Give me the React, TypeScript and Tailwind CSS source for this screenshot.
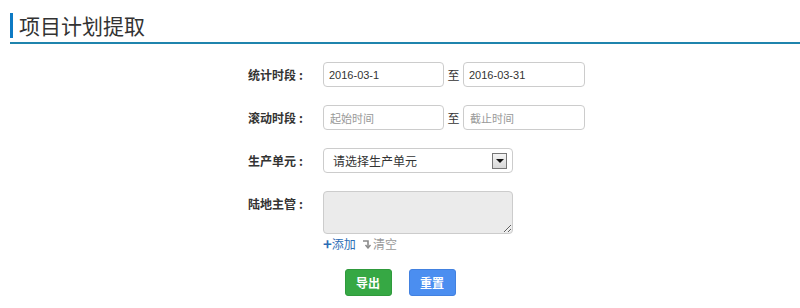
import React from 'react';

const cjk = { fontFamily: '"Noto Sans CJK SC", "Noto Sans", sans-serif' };

const Label: React.FC<{ text: string }> = ({ text }) => (
  <div className="w-[80px] shrink-0 flex justify-end pr-[1px] text-[12px] font-bold leading-[25px] text-[#333]">
    <span>{text}</span>
    <span className="ml-[3px]">:</span>
  </div>
);

const App: React.FC = () => {
  return (
    <div className="w-[800px] h-[308px] bg-white text-[#333]" style={cjk}>
      {/* Title */}
      <div className="pl-[10px] pt-[12px]">
        <div className="flex items-center h-[26px]">
          <div className="w-[3px] h-[25px] bg-[#0d7ac4]" />
          <h1 className="ml-[6px] text-[21px] leading-[26px] font-normal text-[#333]">项目计划提取</h1>
        </div>
        <div className="mt-[4px] h-[2px] bg-[#1f84ad]" />
      </div>

      {/* Form */}
      <div className="ml-[224px] mt-[18px] flex flex-col gap-[18px]">
        <div className="flex items-center">
          <Label text="统计时段" />
          <div className="ml-[19px] flex items-center">
            <input
              className="w-[121px] h-[25px] border border-[#ccc] rounded-[4px] px-[5px] text-[11px] text-[#333] outline-none"
              defaultValue="2016-03-1"
              style={{ fontFamily: '"Liberation Sans", sans-serif' }}
            />
            <span className="w-[19px] text-center text-[12px]">至</span>
            <input
              className="w-[122px] h-[25px] border border-[#ccc] rounded-[4px] px-[5px] text-[11px] text-[#333] outline-none"
              defaultValue="2016-03-31"
              style={{ fontFamily: '"Liberation Sans", sans-serif' }}
            />
          </div>
        </div>

        <div className="flex items-center">
          <Label text="滚动时段" />
          <div className="ml-[19px] flex items-center">
            <input
              className="w-[121px] h-[25px] border border-[#ccc] rounded-[4px] px-[6px] text-[11px] outline-none placeholder:text-[#999]"
              placeholder="起始时间"
            />
            <span className="w-[19px] text-center text-[12px]">至</span>
            <input
              className="w-[122px] h-[25px] border border-[#ccc] rounded-[4px] px-[6px] text-[11px] outline-none placeholder:text-[#999]"
              placeholder="截止时间"
            />
          </div>
        </div>

        <div className="flex items-center">
          <Label text="生产单元" />
          <div className="ml-[19px] w-[190px] h-[25px] border border-[#ccc] rounded-[4px] flex items-center justify-between pl-[9px] pr-[5px]">
            <span className="text-[12px] text-[#333]">请选择生产单元</span>
            <div className="w-[15px] h-[16px] border border-[#777] bg-gradient-to-b from-[#f4f4f4] to-[#d8d8d8] flex items-center justify-center">
              <div className="w-0 h-0 border-l-[4px] border-r-[4px] border-t-[4px] border-l-transparent border-r-transparent border-t-[#111]" />
            </div>
          </div>
        </div>

        <div className="flex items-start">
          <Label text="陆地主管" />
          <div className="ml-[19px] flex flex-col">
            <textarea
              readOnly
              className="w-[190px] h-[43px] border border-[#ccc] rounded-[4px] bg-[#ebebeb] outline-none block"
            />
            <div className="flex items-center mt-[2px] text-[12px] leading-[16px]">
              <span className="text-[#2d6db5] font-bold text-[15px] leading-[14px]">+</span>
              <span className="text-[#2d6db5]">添加</span>
              <svg className="ml-[6px]" width="10" height="10" viewBox="0 0 10 10" fill="none">
                <path d="M1 2h5v6" stroke="#8a8a8a" strokeWidth="1.6" />
                <path d="M3.5 6L6 9l2.5-3" stroke="#8a8a8a" strokeWidth="1.4" />
              </svg>
              <span className="text-[#999] ml-[1px]">清空</span>
            </div>
          </div>
        </div>
      </div>

      {/* Buttons */}
      <div className="flex justify-center gap-[17px] mt-[17px]">
        <button className="w-[47px] h-[27px] rounded-[3px] bg-[#36a844] border border-[#2f9a3c] text-white text-[12px] font-bold">
          导出
        </button>
        <button className="w-[47px] h-[27px] rounded-[3px] bg-[#4b8ef0] border border-[#4281e0] text-white text-[12px] font-bold">
          重置
        </button>
      </div>
    </div>
  );
};

export default App;
